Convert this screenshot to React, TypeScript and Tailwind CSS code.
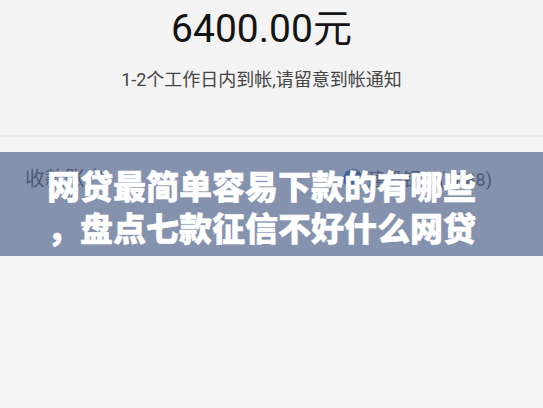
import React from "react";

export default function App() {
  const font = { fontFamily: 'Roboto, "Noto Sans CJK SC", sans-serif' };
  return (
    <div className="relative w-[543px] h-[408px] overflow-hidden bg-[#f5f5f5]" style={font}>
      <div className="h-[137px] bg-[#f3f3f3] flex flex-col items-center pr-[20px] border-b-2 border-[#ebebeb]">
        <div className="mt-[3px] text-[39px] leading-[52px] text-[#141414]">6400.00元</div>
        <div className="mt-[13px] text-[18px] leading-[24px] text-[#444444]">1-2个工作日内到帐,请留意到帐通知</div>
      </div>
      <div className="flex items-center justify-between px-[25px] h-[60px] mt-[12px] text-[20px] text-[#3a3a3a]">
        <span>收款账户</span>
        <span className="flex items-center gap-[4px] pr-[26px]">
          <span className="w-[20px] h-[20px] rounded-full bg-[#1f4fa0]" />
          <span className="text-[18px]">建设银行(8888)</span>
        </span>
      </div>
      <div className="absolute left-0 top-[152px] w-full h-[104px] bg-[rgba(85,104,144,0.7)] pl-[47px] pt-[12px]">
        <div
          className="text-white font-black text-[33px] leading-[42px] [-webkit-text-stroke:0.5px_white]"
          style={{ fontFamily: '"Noto Sans CJK SC", sans-serif' }}
        >
          网贷最简单容易下款的有哪些
          <br />
          ，盘点七款征信不好什么网贷
        </div>
      </div>
    </div>
  );
}
